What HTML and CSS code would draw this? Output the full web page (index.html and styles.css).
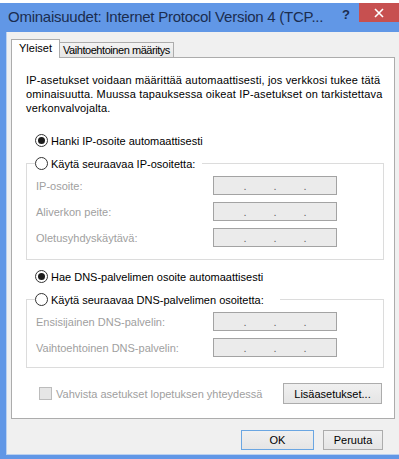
FILE: index.html
```html
<!DOCTYPE html>
<html lang="fi">
<head>
    <meta charset="UTF-8">
    <title>Ominaisuudet: Internet Protocol Version 4 (TCP/IPv4)</title>
    <link rel="stylesheet" href="styles.css">
</head>
<body>
    <div class="window">
        <!-- Otsikkopalkki -->
        <div class="titlebar">
            <span class="title">Ominaisuudet: Internet Protocol Version 4 (TCP...</span>
            <span class="help">?</span>
            <span class="close">
                <svg width="10" height="10" viewBox="0 0 10 10"><path d="M1 1L9 9M9 1L1 9" stroke="#fff" stroke-width="1.6"/></svg>
            </span>
        </div>

        <div class="client">
            <div class="tabs">
                <div class="tab active">Yleiset</div>
                <div class="tab">Vaihtoehtoinen määritys</div>
            </div>

            <div class="panel">
                <p class="intro">IP-asetukset voidaan määrittää automaattisesti, jos verkkosi tukee tätä<br>ominaisuutta. Muussa tapauksessa oikeat IP-asetukset on tarkistettava<br>verkonvalvojalta.</p>

                <div class="option option-first"><span class="radio checked"></span>Hanki IP-osoite automaattisesti</div>

                <fieldset class="group">
                    <legend class="legend-ip"><span class="radio"></span>Käytä seuraavaa IP-osoitetta:</legend>
                    <div class="field"><span class="field-label">IP-osoite:</span><div class="ipbox"><span>.</span><span>.</span><span>.</span></div></div>
                    <div class="field"><span class="field-label">Aliverkon peite:</span><div class="ipbox"><span>.</span><span>.</span><span>.</span></div></div>
                    <div class="field"><span class="field-label">Oletusyhdyskäytävä:</span><div class="ipbox"><span>.</span><span>.</span><span>.</span></div></div>
                </fieldset>

                <div class="option option-dns"><span class="radio checked"></span>Hae DNS-palvelimen osoite automaattisesti</div>

                <fieldset class="group group-dns">
                    <legend class="legend-dns"><span class="radio"></span>Käytä seuraavaa DNS-palvelimen osoitetta:</legend>
                    <div class="field"><span class="field-label">Ensisijainen DNS-palvelin:</span><div class="ipbox"><span>.</span><span>.</span><span>.</span></div></div>
                    <div class="field"><span class="field-label">Vaihtoehtoinen DNS-palvelin:</span><div class="ipbox"><span>.</span><span>.</span><span>.</span></div></div>
                </fieldset>

                <div class="panel-footer">
                    <div class="check-row"><span class="checkbox"></span>Vahvista asetukset lopetuksen yhteydessä</div>
                    <button class="btn btn-advanced">Lisäasetukset...</button>
                </div>
            </div>

            <div class="dialog-buttons">
                <button class="btn btn-default btn-ok">OK</button>
                <button class="btn btn-cancel">Peruuta</button>
            </div>
        </div>
    </div>
</body>
</html>
```

FILE: styles.css
```css
body {
    margin: 0;
    background: #fff;
    font-family: "Liberation Sans", Arial, sans-serif;
    font-size: 11px;
    color: #000;
    overflow: hidden;
}
.window {
    margin-top: 3px;
    width: 399px;
    height: 456px;
    box-sizing: border-box;
    padding: 0 0 4px 6px;
    background: #6197e6;
    display: flex;
    flex-direction: column;
}
.titlebar {
    height: 29px;
    display: flex;
    align-items: flex-start;
}
.title {
    flex: 1;
    padding: 5px 0 0 2px;
    font-size: 15px;
    letter-spacing: -0.25px;
    color: #1b2d4f;
    white-space: nowrap;
}
.help {
    width: 26px;
    padding-top: 4px;
    text-align: center;
    font-size: 13px;
    font-weight: bold;
    color: #1b2d4f;
}
.close {
    width: 40px;
    height: 19px;
    background: #c75050;
    display: flex;
    align-items: center;
    justify-content: center;
}
.client {
    flex: 1;
    background: #f0f0f0;
    border-left: 1px solid #b9d0f0;
    border-bottom: 1px solid #b9d0f0;
    padding: 8px 4px 0 4px;
}
.tabs {
    height: 17px;
    display: flex;
    align-items: flex-end;
}
.tab {
    height: 14px;
    line-height: 14px;
    padding: 0 3px;
    letter-spacing: -0.45px;
    border: 1px solid #acacac;
    border-bottom: none;
    border-left: none;
    background: linear-gradient(#f3f3f3, #e6e6e6);
}
.tab.active {
    position: relative;
    z-index: 1;
    height: 18px;
    line-height: 17px;
    margin-bottom: -1px;
    padding: 0 7px;
    letter-spacing: 0;
    border-left: 1px solid #acacac;
    background: #fff;
}
.panel {
    height: 362px;
    box-sizing: border-box;
    border: 1px solid #acacac;
    background: #fff;
    padding: 15px 10px 0 14px;
}
.intro {
    margin: 0;
    line-height: 14px;
    letter-spacing: 0.15px;
    white-space: nowrap;
}
.option {
    display: flex;
    align-items: center;
    height: 15px;
    margin-left: 9px;
}
.option-first {
    margin-top: 18px;
}
.option-dns {
    margin-top: 9px;
}
.radio {
    width: 11px;
    height: 11px;
    border: 1px solid #333;
    border-radius: 50%;
    background: #fff;
    margin-right: 3px;
    display: inline-flex;
    align-items: center;
    justify-content: center;
    flex-shrink: 0;
}
.radio.checked::after {
    content: "";
    width: 7px;
    height: 7px;
    border-radius: 50%;
    background: #1c1c1c;
}
.group {
    margin: 8px 0 0 0;
    padding: 5px 0 12px 0;
    border: 1px solid #dcdcdc;
}
.group-dns {
    padding-bottom: 10px;
}
.group legend {
    display: flex;
    align-items: center;
    height: 15px;
    margin-left: 8px;
    padding: 0;
    box-sizing: border-box;
}
.legend-ip {
    width: 167px;
}
.legend-dns {
    width: 245px;
}
.field {
    display: flex;
    align-items: center;
    height: 19px;
    padding-left: 9px;
    margin-bottom: 7px;
    color: #a0a0a0;
}
.field:last-child {
    margin-bottom: 0;
}
.field-label {
    width: 177px;
}
.ipbox {
    width: 124px;
    height: 19px;
    box-sizing: border-box;
    border: 1px solid #a3a3a3;
    background: #ebebeb;
    display: flex;
    justify-content: center;
    line-height: 19px;
    color: #666;
}
.ipbox span {
    width: 30px;
    text-align: center;
}
.panel-footer {
    display: flex;
    align-items: center;
    justify-content: space-between;
    margin: 15px 2px 0 0;
}
.check-row {
    display: flex;
    align-items: center;
    margin-left: 13px;
    color: #a0a0a0;
}
.checkbox {
    width: 11px;
    height: 11px;
    border: 1px solid #bcbcbc;
    background: #e6e6e6;
    margin-right: 4px;
}
.btn {
    height: 21px;
    padding: 0 8px;
    font: inherit;
    color: #000;
    border: 1px solid #acacac;
    background: linear-gradient(#f0f0f0, #e5e5e5);
}
.btn-advanced {
    width: 99px;
}
.dialog-buttons {
    display: flex;
    justify-content: flex-end;
    gap: 9px;
    margin: 11px 12px 0 0;
}
.dialog-buttons .btn {
    height: 20px;
}
.btn-ok {
    width: 73px;
}
.btn-cancel {
    width: 60px;
}
.btn-default {
    border-color: #6aa6e2;
}
```
